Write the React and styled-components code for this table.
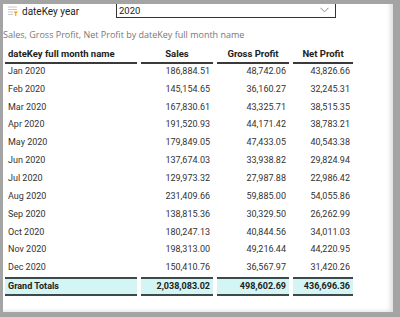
import React from 'react';
import styled, { createGlobalStyle } from 'styled-components';

const GlobalStyle = createGlobalStyle`
    html, body {
        margin: 0;
        padding: 0;
        background: #a4a4a4;
    }
    body {
        font-family: "Segoe UI", Roboto, "Liberation Sans", sans-serif;
        color: #333;
    }
`;

const Frame = styled.div`
    width: 390px;
    height: 308px;
    margin: 4px 0 0 3px;
    background: #fff;
    box-shadow: inset -5px -3px 4px -2px rgba(0, 0, 0, 0.12);
    overflow: hidden;
`;

const SlicerRow = styled.div`
    display: flex;
    align-items: stretch;
    height: 14px;
`;

const SlicerLabel = styled.div`
    width: 113px;
    display: flex;
    align-items: center;
    gap: 4px;
    padding-left: 5px;
    box-sizing: border-box;
    font-size: 10px;
    color: #252423;
`;

const Dropdown = styled.div`
    width: 220px;
    box-sizing: border-box;
    border: 1px solid #333;
    border-top: none;
    display: flex;
    align-items: center;
    justify-content: space-between;
    padding: 0 6px 1px 2px;
    font-size: 9.5px;
    color: #252423;
`;

const Subtitle = styled.div`
    margin-top: 10px;
    font-family: "Open Sans", sans-serif;
    font-size: 9px;
    color: #777;
    white-space: nowrap;
`;

const Grid = styled.div`
    display: grid;
    grid-template-columns: 132px 72px 72px 60px;
    column-gap: 4px;
    margin: 4px 0 0 2px;
    font-size: 9px;
`;

const HeadCell = styled.div`
    height: 17px;
    border-bottom: 2px solid #3a3a3a;
    font-size: 9.5px;
    font-weight: 700;
    color: #222;
    display: flex;
    align-items: center;
    justify-content: ${p => (p.$num ? 'center' : 'flex-start')};
    padding: 0 3px;
    white-space: nowrap;
`;

const Cell = styled.div`
    box-sizing: border-box;
    height: 17.85px;
    display: flex;
    align-items: center;
    justify-content: ${p => (p.$num ? 'flex-end' : 'flex-start')};
    padding: 0 3px 4px;
    color: #333;
    white-space: nowrap;
`;

const TotalCell = styled(Cell)`
    height: 19px;
    margin-top: -1px;
    padding-bottom: 1px;
    background: #d3f5f4;
    border-top: 2px solid #3d4a4a;
    border-bottom: 2px solid #3d4a4a;
    font-weight: 700;
    color: #222;
`;

const SlicerIcon = () => (
    <svg width="10" height="10" viewBox="0 0 10 10">
        <rect x="0" y="0.5" width="9" height="1" fill="#c8c8c8" />
        <rect x="0" y="3" width="9" height="1" fill="#c8c8c8" />
        <rect x="0" y="5.5" width="5" height="1" fill="#c8c8c8" />
        <rect x="0" y="8" width="5" height="1" fill="#c8c8c8" />
        <path d="M5.5 5.5 H10 L8.3 7.5 V10 H7.2 V7.5 Z" fill="#f2a300" />
    </svg>
);

const Chevron = () => (
    <svg width="9" height="6" viewBox="0 0 9 6">
        <path d="M0.5 0.8 L4.5 4.8 L8.5 0.8" fill="none" stroke="#777" strokeWidth="0.9" />
    </svg>
);

const rows = [
    ['Jan 2020', '186,884.51', '48,742.06', '43,826.66'],
    ['Feb 2020', '145,154.65', '36,160.27', '32,245.31'],
    ['Mar 2020', '167,830.61', '43,325.71', '38,515.35'],
    ['Apr 2020', '191,520.93', '44,171.42', '38,783.21'],
    ['May 2020', '179,849.05', '47,433.05', '40,543.38'],
    ['Jun 2020', '137,674.03', '33,938.82', '29,824.94'],
    ['Jul 2020', '129,973.32', '27,987.88', '22,986.42'],
    ['Aug 2020', '231,409.66', '59,885.00', '54,055.86'],
    ['Sep 2020', '138,815.36', '30,329.50', '26,262.99'],
    ['Oct 2020', '180,247.13', '40,844.56', '34,011.03'],
    ['Nov 2020', '198,313.00', '49,216.44', '44,220.95'],
    ['Dec 2020', '150,410.76', '36,567.97', '31,420.26'],
];

const totals = ['Grand Totals', '2,038,083.02', '498,602.69', '436,696.36'];

const App = () => {
    return (
        <>
            <GlobalStyle />
            <Frame>
                <SlicerRow>
                    <SlicerLabel>
                        <SlicerIcon />
                        dateKey year
                    </SlicerLabel>
                    <Dropdown>
                        <span>2020</span>
                        <Chevron />
                    </Dropdown>
                </SlicerRow>
                <Subtitle>Sales, Gross Profit, Net Profit by dateKey full month name</Subtitle>
                <Grid>
                    <HeadCell>dateKey full month name</HeadCell>
                    <HeadCell $num>Sales</HeadCell>
                    <HeadCell $num>Gross Profit</HeadCell>
                    <HeadCell $num>Net Profit</HeadCell>
                    {rows.map(r => r.map((v, i) => (
                        <Cell key={r[0] + i} $num={i > 0}>{v}</Cell>
                    )))}
                    {totals.map((v, i) => (
                        <TotalCell key={'t' + i} $num={i > 0}>{v}</TotalCell>
                    ))}
                </Grid>
            </Frame>
        </>
    );
};

export default App;
